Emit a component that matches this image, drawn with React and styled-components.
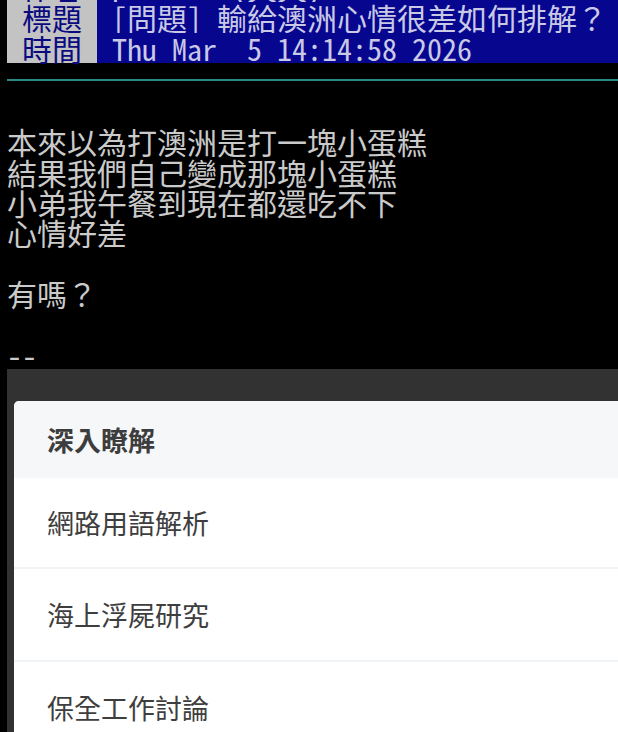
import React from "react";
import styled, { createGlobalStyle } from "styled-components";

const Global = createGlobalStyle`
  html, body { margin: 0; padding: 0; background: #000; }
  body { width: 618px; height: 732px; overflow: hidden; }
`;

const mono = `"Noto Sans Mono CJK TC", "Noto Sans CJK TC", "Liberation Mono", monospace`;

const Page = styled.div`
  padding-left: 7px;
  background: #000;
  height: 732px;
  overflow: hidden;
  box-sizing: border-box;
  display: flex;
  flex-direction: column;
  font-family: ${mono};
`;

const Header = styled.div`
  margin-top: -28px;
  display: flex;
  flex-direction: column;
  flex: none;
`;

const MetaRow = styled.div`
  display: flex;
  height: 30.4px;
  font-size: 30px;
  line-height: 30.4px;
  white-space: pre;
`;

const MetaLabel = styled.div`
  width: 90px;
  flex: none;
  box-sizing: border-box;
  padding-left: 15px;
  background: #c3c3c3;
  color: #0a0a80;
`;

const MetaValue = styled.div`
  flex: 1;
  padding-left: 15px;
  background: #06068f;
  color: #c9c9e6;
`;

const Rule = styled.div`
  margin-top: 16px;
  height: 2px;
  flex: none;
  background: #2a8882;
`;

const Body = styled.div`
  margin-top: 45px;
  flex: none;
  font-size: 30px;
  line-height: 30.4px;
  color: #cacaca;
  white-space: pre;
`;

const Line = styled.div`
  height: 30.4px;
`;

const Panel = styled.div`
  flex: 1;
  min-height: 0;
  background: #323232;
  padding: 32px 0 0 7px;
`;

const Card = styled.div`
  background: #fff;
  border-radius: 5px 0 0 0;
  overflow: hidden;
  font-family: "Noto Sans CJK TC", "Noto Sans", sans-serif;
`;

const CardHead = styled.div`
  height: 77px;
  display: flex;
  align-items: center;
  padding-left: 33px;
  background: #f5f7f9;
  color: #3d3d3d;
  font-size: 27px;
  font-weight: 700;
`;

const Item = styled.div`
  height: ${(p) => p.$h}px;
  display: flex;
  align-items: center;
  padding-left: 33px;
  border-top: ${(p) => (p.$first ? "none" : "2px solid #f1f4f6")};
  color: #3e3e3e;
  font-size: 27px;
`;

const lines = [
  "本來以為打澳洲是打一塊小蛋糕",
  "結果我們自己變成那塊小蛋糕",
  "小弟我午餐到現在都還吃不下",
  "心情好差",
  "",
  "有嗎？",
  "",
  "--",
];

const items = [
  { t: "網路用語解析", h: 89 },
  { t: "海上浮屍研究", h: 91 },
  { t: "保全工作討論", h: 91 },
];

export default function App() {
  return (
    <>
      <Global />
      <Page>
        <Header>
          <MetaRow>
            <MetaLabel>作者 </MetaLabel>
            <MetaValue>pttuser (天天)</MetaValue>
          </MetaRow>
          <MetaRow>
            <MetaLabel>標題 </MetaLabel>
            <MetaValue>[問題] 輸給澳洲心情很差如何排解？</MetaValue>
          </MetaRow>
          <MetaRow>
            <MetaLabel>時間 </MetaLabel>
            <MetaValue>Thu Mar  5 14:14:58 2026</MetaValue>
          </MetaRow>
        </Header>
        <Rule />
        <Body>
          {lines.map((l, i) => (
            <Line key={i}>{l}</Line>
          ))}
        </Body>
        <Panel>
          <Card>
            <CardHead>深入瞭解</CardHead>
            {items.map((it, i) => (
              <Item key={i} $h={it.h} $first={i === 0}>
                {it.t}
              </Item>
            ))}
          </Card>
        </Panel>
      </Page>
    </>
  );
}
